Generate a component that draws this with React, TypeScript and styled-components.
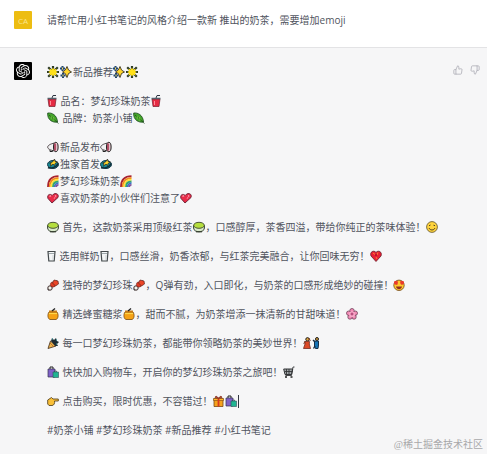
import React from "react";
import styled, { createGlobalStyle } from "styled-components";
import { FiThumbsUp, FiThumbsDown } from "react-icons/fi";
import { SiOpenai } from "react-icons/si";

const GlobalStyle = createGlobalStyle`
  * { box-sizing: border-box; }
  body {
    margin: 0;
    background: #f6f6f7;
    color: #50545e;
    font-family: "Open Sans", "Noto Sans CJK SC", sans-serif;
    font-size: 10px;
    line-height: 17px;
  }
`;

const Page = styled.main`
  position: relative;
  min-height: 100vh;
  display: flex;
  flex-direction: column;
`;

const Message = styled.article<{ $user?: boolean }>`
  display: flex;
  align-items: flex-start;
  gap: 15px;
  padding: ${(p) => (p.$user ? "11px 7px 18px 14px" : "14px 7px 14px 14px")};
  background: ${(p) => (p.$user ? "#ffffff" : "#f6f6f7")};
  border-bottom: ${(p) => (p.$user ? "1px solid #e3e3e5" : "none")};
`;

const Avatar = styled.div<{ $color: string }>`
  flex: none;
  width: 18px;
  height: 18px;
  display: flex;
  align-items: center;
  justify-content: center;
  border-radius: 1px;
  background: ${(p) => p.$color};
  color: ${(p) => (p.$color === "#000000" ? "#ffffff" : "#f9e58c")};
  font-size: 8px;
`;

const Content = styled.div`
  flex: 1;
  min-width: 0;
  display: flex;
  flex-direction: column;
  gap: 12px;
  padding-top: 1px;
`;

const Reply = styled(Content)`
  padding-top: 2px;
`;

const Paragraph = styled.p`
  margin: 0;
`;

const Line = styled.span`
  display: block;
  height: 17px;
  white-space: nowrap;
`;

const Glyph = styled.svg`
  height: 12px;
  margin-right: 1px;
  vertical-align: -2px;
`;

const Caret = styled.span`
  display: inline-block;
  width: 1px;
  height: 13px;
  background: #333842;
  vertical-align: -3px;
`;

const Actions = styled.div`
  display: flex;
  gap: 7px;
  padding-top: 3px;
`;

const IconButton = styled.button`
  display: flex;
  padding: 0;
  border: 0;
  background: none;
  color: #b0b0b8;
  cursor: pointer;
`;

const Watermark = styled.div`
  position: absolute;
  right: 4px;
  bottom: 1px;
  color: #a8a8aa;
  font-family: "Liberation Serif", "Noto Sans CJK SC", serif;
`;

type Art = { w?: number; label: string; art: React.ReactNode };
const K = "#222222";

const bag = (
  <>
    <path d="M1 3h7v8H1z" fill="#8062c8" stroke="#35324d" strokeWidth=".7" />
    <path d="M3 3V1h3v2" fill="none" stroke={K} />
    <path d="M6 6h5.500v5.500H6z" fill="#20b592" stroke="#30515a" strokeWidth=".6" />
    <path d="M7.500 6V5h2v1" fill="none" stroke="#30515a" strokeWidth=".7" />
  </>
);

const emoji: Record<string, Art> = {
  star: {
    label: "🌟",
    art: (
      <>
        <path d="M6 0v12M0 6h12M1.200 1.200l9.600 9.600M10.800 1.200l-9.600 9.600" stroke="#2a3825" strokeWidth="2.200" />
        <path d="M6 1.500l1.200 2L9.700 2.800 9 5l1.700 1L9 7.200l.7 2.300-2.500-.8L6 10.500 4.800 8.700l-2.500.8.700-2.300L1.300 6 3 5l-.7-2.200 2.500.7z" fill="#ffe019" />
      </>
    ),
  },
  sparkles: {
    label: "✨",
    art: (
      <>
        <path d="M2.500 0v5M0 2.500h5M3 7v5M.500 9.500h5" stroke="#1f4470" strokeWidth="2" />
        <path d="M7 .5l1.500 3.500L11.500 6 8.500 7.500 7 11.500 5.300 7.500 2.500 6l2.800-2z" fill="#ffd52a" stroke="#3d3724" strokeWidth=".9" />
        <path d="M2.500 1.500v2M3 8.500v2" stroke="#ffe05a" />
      </>
    ),
  },
  cup: {
    w: 10,
    label: "🥤",
    art: (
      <>
        <path d="M5 3l1-2.500h3" fill="none" stroke="#2d3340" />
        <path d="M1 4h8L8 11.500H2z" fill="#e52b43" stroke="#71202e" strokeWidth=".7" />
        <path d="M.5 3.500h9" stroke="#53606b" strokeWidth="1.500" />
        <path d="M3.500 6v4" stroke="#ff8c98" />
      </>
    ),
  },
  leaf: {
    label: "🍃",
    art: (
      <>
        <path d="M.7 1C5 .5 10 3 10.500 10 6 11 0 8 .7 1z" fill="#45a52b" stroke="#17481a" strokeWidth=".8" />
        <path d="M2 3l9.500 8.500" stroke="#163f16" strokeWidth=".7" />
        <path d="M4 4l1 3M6.500 5l.5 4" stroke="#8bd549" strokeWidth=".6" />
      </>
    ),
  },
  horn: {
    label: "📢",
    art: (
      <>
        <path d="M7.500 2C3 3 .7 4.500.7 6.200S3 9 7.500 10z" fill="#f1f1f2" stroke="#4d4347" />
        <path d="M3 9v1.500h2.500V9.500" fill="none" stroke={K} />
        <ellipse cx="8.800" cy="6" rx="2.300" ry="4.700" fill="#e3c3ca" stroke={K} />
        <path d="M8 2.500v7" stroke="#a52c49" strokeWidth="1.500" />
      </>
    ),
  },
  planet: {
    label: "💫",
    art: (
      <>
        <ellipse cx="6" cy="6.500" rx="5.500" ry="4" fill="#168a95" stroke="#183b4b" />
        <path d="M1 9.500C4 11 10 9 11 5.500" fill="none" stroke="#112d37" strokeWidth="1.500" />
        <path d="M7.500 1l.5 2.500 2.500.5L8 5.500 7.500 7.500 6 6 3.500 8.200 4 5.500 2.500 5l3-1z" fill="#ffd72c" stroke={K} strokeWidth=".7" />
      </>
    ),
  },
  rainbow: {
    label: "🌈",
    art: (
      <g fill="none" strokeWidth="1.800">
        <path d="M1 12C1 5 5 1.200 11.500 1.200" stroke="#a8232f" />
        <path d="M2.700 12C2.700 6 6 3 11.500 3" stroke="#f38b1f" />
        <path d="M4.400 12C4.400 7.500 7 4.700 11.500 4.700" stroke="#ffe238" />
        <path d="M6 12c0-3.500 2-5.500 5.500-5.500" stroke="#35a86c" />
        <path d="M7.600 12c0-2 1.500-3.800 3.900-3.800" stroke="#3974c8" />
        <path d="M9.200 12c0-1.300 1-2.200 2.300-2.200" stroke="#81529d" />
      </g>
    ),
  },
  heart: {
    label: "💖",
    art: (
      <>
        <path d="M5 11L1 6.500C-.5 3 3 1 5.200 3.500 7.500 0 12.500 1.500 11 5.500z" fill="#e82b48" stroke="#671e31" strokeWidth=".9" />
        <path d="M2.500 4.500l1.500-.8M8 3.500l1.200 1" stroke="#ff9db0" strokeWidth="1.400" />
        <path d="M7 7l1-2" stroke="#ff7991" />
      </>
    ),
  },
  tea: {
    label: "🍵",
    art: (
      <>
        <path d="M.6 4v3c0 5 10.800 5 10.800 0V4" fill="#d9e9ca" stroke="#344031" />
        <ellipse cx="6" cy="4.300" rx="5.300" ry="3" fill="#b4de3e" stroke="#4b5737" />
        <path d="M3 10.700h6" stroke="#394233" strokeWidth="1.300" />
      </>
    ),
  },
  milk: {
    w: 9,
    label: "🥛",
    art: (
      <>
        <path d="M1 1.500h7L7.200 11H1.800z" fill="#f3f5f6" stroke="#444a4d" strokeWidth="1.200" />
        <path d="M2 3.500h5" stroke="#9da7ab" />
        <path d="M6 5v5" stroke="#cbd1d4" />
      </>
    ),
  },
  pearl: {
    label: "🍡",
    art: (
      <>
        <path d="M1 11l9-9" stroke="#2a2424" strokeWidth="2" />
        <circle cx="3" cy="9" r="2.200" fill="#f4f3ec" stroke="#382727" />
        <circle cx="6" cy="5.500" r="2.600" fill="#df3c24" stroke="#7b2923" strokeWidth=".7" />
        <path d="M7 1l4 1 .5 3-3 2-3-3z" fill="#ec4527" stroke="#5e2721" strokeWidth=".7" />
      </>
    ),
  },
  honey: {
    label: "🍯",
    art: (
      <>
        <path d="M2 4h8c2 3 1 7-1 7.500H3C1 11 0 7 2 4z" fill="#f5a216" stroke="#764912" strokeWidth=".8" />
        <path d="M2 3.500h8" stroke="#c57a17" strokeWidth="2" />
        <path d="M5 3l3-2.500" stroke={K} strokeWidth="1.300" />
        <path d="M2 5.500h8" stroke="#ffd84b" strokeWidth="1.200" />
      </>
    ),
  },
  smile: {
    label: "😋",
    art: (
      <>
        <circle cx="6" cy="6" r="5.400" fill="#ffd43d" stroke="#61502a" strokeWidth=".8" />
        <path d="M3 4.700l1.500-.7M7.500 4.200L9 4.700M3 7c1 2.600 5 2.600 6 0" fill="none" stroke="#544322" />
      </>
    ),
  },
  bigHeart: {
    label: "💝",
    art: (
      <>
        <path d="M6 11.500L1 6C-.7 2 3.800-.5 6 2.500 8.200-.5 12.700 2 11 6z" fill="#e91f35" stroke="#64202a" strokeWidth=".8" />
        <path d="M3 3l2 1.500M8 2.500L7 5M6 7l1 2" stroke="#f98333" strokeWidth="1" />
        <path d="M5 4h2v2H5z" fill="#b9172b" />
      </>
    ),
  },
  love: {
    label: "😍",
    art: (
      <>
        <circle cx="6" cy="6.300" r="5.200" fill="#ffc82f" stroke="#6e451b" strokeWidth=".8" />
        <path d="M1 2.500l2-.7 2 .7-.4 3L3 6 1 4.500zM7 2.500l2-.7 2 .7v2L9 6 7.500 5z" fill="#e83a2d" />
        <path d="M3 7.500h6c-.6 3.500-5.400 3.500-6 0z" fill="#8f2e20" />
      </>
    ),
  },
  flower: {
    label: "🌸",
    art: (
      <>
        <g fill="#f38cb6" stroke="#70435b" strokeWidth=".8">
          <circle cx="6" cy="2.700" r="2.200" />
          <circle cx="9.300" cy="5.200" r="2.200" />
          <circle cx="8" cy="9" r="2.200" />
          <circle cx="4" cy="9" r="2.200" />
          <circle cx="2.700" cy="5.200" r="2.200" />
        </g>
        <circle cx="6" cy="6.200" r="3" fill="#f8a8c8" />
        <path d="M6 4.500v3M4.500 6h3" stroke="#a43469" />
      </>
    ),
  },
  party: {
    label: "🎉",
    art: (
      <>
        <path d="M1 11.500L3.500 4 9 9z" fill="#efb44b" stroke="#513b25" strokeWidth=".9" />
        <path d="M4 4l1-3 2 2 2-2 1 3 2 1-2 2 1 2-3 0z" fill="#202c32" />
        <path d="M5 2h1M9 3h1M9 7h1" stroke="#35a4aa" strokeWidth="1.200" />
        <path d="M3 6l4 4" stroke="#a85b25" strokeWidth=".7" />
      </>
    ),
  },
  woman: {
    w: 8,
    label: "💃",
    art: (
      <>
        <circle cx="4.500" cy="2.300" r="1.700" fill="#dca33d" stroke={K} />
        <path d="M2 4.500h4.500L6.300 7l1.200 4.500h-7L2 7z" fill="#dc4a27" stroke="#722c23" strokeWidth=".8" />
        <path d="M2 4L.8 7M6 1l1.300 3" stroke="#7b3925" />
      </>
    ),
  },
  man: {
    w: 8,
    label: "🕺",
    art: (
      <>
        <circle cx="5" cy="2" r="1.500" fill="#d49d3b" stroke={K} />
        <path d="M2.500 4h4v4L6 11.500H3.500L2.500 9z" fill="#1673b5" stroke="#142e48" />
        <path d="M3 5L1 3M1.500 11.500L3 9" stroke="#172c42" strokeWidth="1.400" />
      </>
    ),
  },
  bag: { label: "🛍", art: bag },
  cart: {
    label: "🛒",
    art: (
      <>
        <path d="M.7 3h9L8.500 8.500H2z" fill="#a2a7a9" stroke="#343638" />
        <path d="M11.500 1H10L8.500 9.500H2.500M3.500 3v5M6 3v5M1.500 5.500h8" fill="none" stroke="#343638" strokeWidth=".9" />
        <path d="M2 11h2M7.500 11h2" stroke={K} strokeWidth="1.700" />
      </>
    ),
  },
  point: {
    label: "👉",
    art: (
      <path d="M.7 5L4.500 2.500 6 4h5.300v2H7.500c.5 2-.5 4.500-2.500 4.500H2L.7 9z" fill="#f9bf37" stroke="#5b4824" strokeWidth=".9" />
    ),
  },
  gift: {
    w: 11,
    label: "🎁",
    art: (
      <>
        <path d="M1 3.500h9v8H1z" fill="#f6a21c" stroke="#7a4715" strokeWidth=".8" />
        <path d="M.5 3.500h10v2H.5z" fill="#ffb72d" stroke="#7a4715" strokeWidth=".6" />
        <path d="M5.500 3v8.500" stroke="#d63821" strokeWidth="1.800" />
        <path d="M5.500 3L3 1 2 2.500zM5.500 3L8 1l1 1.500z" fill="#d63821" stroke="#782b1c" strokeWidth=".7" />
      </>
    ),
  },
};

const Emoji = ({ name }: { name: string }) => {
  const { w = 12, label, art } = emoji[name];
  return (
    <Glyph width={w} viewBox={`0 0 ${w} 12`} role="img" aria-label={label}>
      {art}
    </Glyph>
  );
};

const reply: string[][] = [
  ["{star}{sparkles}新品推荐{sparkles}{star}"],
  ["{cup} 品名：梦幻珍珠奶茶{cup}", "{leaf} 品牌：奶茶小铺{leaf}"],
  [
    "{horn}新品发布{horn}",
    "{planet}独家首发{planet}",
    "{rainbow}梦幻珍珠奶茶{rainbow}",
    "{heart}喜欢奶茶的小伙伴们注意了{heart}",
  ],
  ["{tea} 首先，这款奶茶采用顶级红茶{tea}，口感醇厚，茶香四溢，带给你纯正的茶味体验！{smile}"],
  ["{milk} 选用鲜奶{milk}，口感丝滑，奶香浓郁，与红茶完美融合，让你回味无穷！{bigHeart}"],
  ["{pearl} 独特的梦幻珍珠{pearl}，Q弹有劲，入口即化，与奶茶的口感形成绝妙的碰撞！{love}"],
  ["{honey} 精选蜂蜜糖浆{honey}，甜而不腻，为奶茶增添一抹清新的甘甜味道！{flower}"],
  ["{party} 每一口梦幻珍珠奶茶，都能带你领略奶茶的美妙世界！{woman}{man}"],
  ["{bag} 快快加入购物车，开启你的梦幻珍珠奶茶之旅吧！{cart}"],
  ["{point} 点击购买，限时优惠，不容错过！{gift}{bag}{caret}"],
  ["#奶茶小铺 #梦幻珍珠奶茶 #新品推荐 #小红书笔记"],
];

const RichLine = ({ text }: { text: string }) => (
  <Line>
    {text.split(/[{}]/).map((part, i) => {
      if (i % 2 === 0) return part;
      return part === "caret" ? <Caret key={i} /> : <Emoji key={i} name={part} />;
    })}
  </Line>
);

export default function App() {
  return (
    <>
      <GlobalStyle />
      <Page>
        <Message $user>
          <Avatar $color="#edbd12">CA</Avatar>
          <Content>
            <Paragraph>请帮忙用小红书笔记的风格介绍一款新 推出的奶茶，需要增加emoji</Paragraph>
          </Content>
        </Message>
        <Message>
          <Avatar $color="#000000">
            <SiOpenai size={14} />
          </Avatar>
          <Reply>
            {reply.map((lines, i) => (
              <Paragraph key={i}>
                {lines.map((text) => (
                  <RichLine key={text} text={text} />
                ))}
              </Paragraph>
            ))}
          </Reply>
          <Actions>
            <IconButton aria-label="赞">
              <FiThumbsUp size={10} />
            </IconButton>
            <IconButton aria-label="踩">
              <FiThumbsDown size={10} />
            </IconButton>
          </Actions>
        </Message>
        <Watermark>@稀土掘金技术社区</Watermark>
      </Page>
    </>
  );
}
